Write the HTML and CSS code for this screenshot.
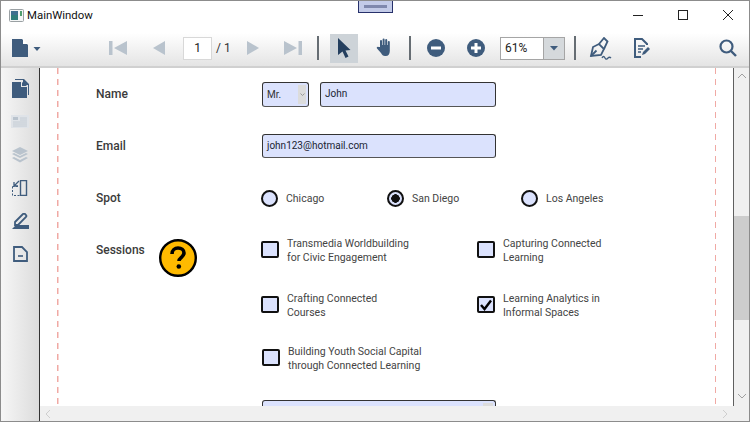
FILE: index.html
```html
<!DOCTYPE html>
<html lang="en">
<head>
<meta charset="utf-8">
<title>MainWindow</title>
<link rel="stylesheet" href="styles.css">
</head>
<body>
<div class="window">
  <div class="tab"><span class="tab-bar"></span></div>
  <header class="titlebar">
    <svg class="app-icon" width="15" height="13" viewBox="0 0 15 13"><rect x=".5" y=".5" width="14" height="12" rx="1" fill="#f4f6f6" stroke="#9aa0a3"/><rect x="2" y="2" width="7" height="9" fill="#2f7d7a"/><rect x="2" y="2" width="7" height="4" fill="#3e6f8f"/><rect x="11" y="2" width="2" height="5" fill="#4f9e6e"/></svg>
    <span class="title">MainWindow</span>
    <div class="caption">
      <svg width="45" height="14" viewBox="0 0 45 14"><path d="M19 7.500h10" stroke="#222" fill="none"/></svg>
      <svg width="45" height="14" viewBox="0 0 45 14"><rect x="19.500" y="2.500" width="9" height="9" stroke="#222" fill="none"/></svg>
      <svg width="45" height="14" viewBox="0 0 45 14"><path d="M19 2l10 10M29 2L19 12" stroke="#222" fill="none"/></svg>
    </div>
  </header>
  <nav class="toolbar">
    <svg class="tool" width="16" height="18" viewBox="0 0 16 18"><path d="M0 0h10l6 6v12H0z" fill="#3f5c7d"/><path d="M11 0l5 5h-5z" fill="#fff"/></svg>
    <svg class="caret" width="16" height="18" viewBox="0 0 16 18"><path d="M4.500 8h7L8 12z" fill="#3f5c7d"/></svg>
    <svg class="tool m-first" width="28" height="16" viewBox="0 0 28 16"><path d="M5 1h3.500v14H5zM23 1v14L10 8z" fill="#b9c3cd"/></svg>
    <svg class="tool m-13" width="28" height="16" viewBox="0 0 28 16"><path d="M20 1v14L8 8z" fill="#b9c3cd"/></svg>
    <span class="page-box">1</span>
    <span class="page-total">/ 1</span>
    <svg class="tool m-next" width="28" height="16" viewBox="0 0 28 16"><path d="M8 1v14l12-7z" fill="#b9c3cd"/></svg>
    <svg class="tool m-12" width="28" height="16" viewBox="0 0 28 16"><path d="M5 1v14l13-7zM19.500 1H23v14h-3.500z" fill="#b9c3cd"/></svg>
    <span class="sep m-sep1"></span>
    <span class="select-btn"><svg width="16" height="20" viewBox="0 0 16 20"><path d="M2 0l12.500 12-5 .5 3 6-3 1.500-3-6.500L2 17z" fill="#243f5f"/></svg></span>
    <svg class="tool m-hand" width="18" height="20" viewBox="0 0 18 20"><path d="M4 9V3a1 1 0 0 1 2 0v4h.6V1.500a1 1 0 0 1 2 0V7h.6V2a1 1 0 0 1 2 0v5h.6V4a1 1 0 0 1 2 0v9c0 3-1.500 5-4 5H9c-2 0-3-1-4-3L1 10.500c-.8-1 .5-2.200 1.500-1.500z" fill="#3f5c7d"/></svg>
    <span class="sep m-sep2"></span>
    <svg class="tool m-minus" width="18" height="18" viewBox="0 0 18 18"><circle cx="9" cy="9" r="9" fill="#3f5c7d"/><rect x="4" y="7.500" width="10" height="3" fill="#fff"/></svg>
    <svg class="tool m-plus" width="18" height="18" viewBox="0 0 18 18"><circle cx="9" cy="9" r="9" fill="#3f5c7d"/><path d="M4 7.500h3.500V4h3v3.500H14v3h-3.500V14h-3v-3.500H4z" fill="#fff"/></svg>
    <div class="zoom-box"><span class="zoom-val">61%</span><span class="zoom-btn"><svg width="8" height="5" viewBox="0 0 8 5"><path d="M0 0h8L4 4.500z" fill="#3f5c7d"/></svg></span></div>
    <span class="sep m-sep3"></span>
    <svg class="tool m-sign" width="24" height="23" viewBox="0 0 24 23"><path d="M2 19l2-9 6-3 5 5-3 6z" fill="none" stroke="#3f5c7d" stroke-width="1.800"/><path d="M10 7l5-6 3.500 3.500L15 12M2 19l5.500-5.500" fill="none" stroke="#3f5c7d" stroke-width="1.800"/><path d="M13 21c1-2 2-2 3 0s2 1 3 0 2-1 3 0" fill="none" stroke="#3f5c7d" stroke-width="1.300"/></svg>
    <svg class="tool m-form" width="18" height="20" viewBox="0 0 18 20"><path d="M8 19H2V1h7l5 5v1" fill="none" stroke="#3f5c7d" stroke-width="2"/><path d="M5 8h7M5 11h5M5 14h3" stroke="#3f5c7d" stroke-width="1.500"/><path d="M9 17l1-3 5-5 2 2-5 5z" fill="#3f5c7d"/></svg>
    <svg class="tool m-search" width="18" height="18" viewBox="0 0 18 18"><circle cx="7.500" cy="7.500" r="6" fill="none" stroke="#3f5c7d" stroke-width="2.200"/><path d="M12 12l5 5" stroke="#3f5c7d" stroke-width="2.400"/></svg>
  </nav>
  <div class="rule"></div>
  <div class="workspace">
    <aside class="sidebar">
      <svg width="17" height="19" viewBox="0 0 17 19"><path d="M3 0h9l5 5v11h-1V6h-5V1H3z" fill="#3f5c7d"/><path d="M0 3h9v5h6v11H0z" fill="#3f5c7d"/><path d="M10 3l5 4h-5z" fill="#3f5c7d"/></svg>
      <svg width="18" height="13" viewBox="0 0 18 13"><rect width="18" height="13" fill="#dfe3e8"/><path d="M2 2h5v3H2z" fill="#b9c3cd"/><path d="M9 3h7M9 5h7M2 7h14M2 9h14M2 11h14" stroke="#c4ccd4"/></svg>
      <svg width="16" height="16" viewBox="0 0 16 16"><path d="M8 0l8 4-8 4-8-4z" fill="#b9c3cd"/><path d="M0 7l2-1 6 3 6-3 2 1-8 4z" fill="#b9c3cd"/><path d="M0 11l2-1 6 3 6-3 2 1-8 4.500z" fill="#b9c3cd"/></svg>
      <svg width="16" height="16" viewBox="0 0 16 16"><path d="M8.500 .5h6v15h-6z" fill="none" stroke="#3f5c7d" stroke-width="1.400"/><path d="M.5 6.500h7M.5 6.500v9h7" fill="none" stroke="#3f5c7d" stroke-dasharray="2 1.500"/><path d="M7 1L2.500 5.500M2 2v4h4" fill="none" stroke="#3f5c7d" stroke-width="1.300"/></svg>
      <svg width="17" height="16" viewBox="0 0 17 16"><path d="M3 9l8-8a1.500 1.500 0 0 1 2 0l1 1a1.500 1.500 0 0 1 0 2l-8 8H3z" fill="none" stroke="#3f5c7d" stroke-width="1.800"/><path d="M0 16l4-4h13v4z" fill="#3f5c7d"/></svg>
      <svg width="15" height="16" viewBox="0 0 15 16"><path d="M1 1h8l5 5v9H1z" fill="none" stroke="#3f5c7d" stroke-width="1.800"/><path d="M5 10h5" stroke="#3f5c7d" stroke-width="1.600"/></svg>
    </aside>
    <main class="viewer">
      <div class="viewer-row">
        <div class="viewer-inner">
          <div class="page">
            <div class="form-row row-name">
              <span class="label">Name</span>
              <div class="fields">
                <div class="field field-title"><span class="title-val">Mr.</span><span class="dd"><svg width="5" height="3" viewBox="0 0 5 3"><path d="M.5.500l2 2 2-2" fill="none" stroke="#888" stroke-width=".8"/></svg></span></div>
                <div class="field field-first">John</div>
              </div>
            </div>
            <div class="form-row row-email">
              <span class="label">Email</span>
              <div class="fields"><div class="field field-email">john123@hotmail.com</div></div>
            </div>
            <div class="form-row row-spot">
              <span class="label">Spot</span>
              <div class="radios">
                <label class="radio r1"><span class="dot"></span>Chicago</label>
                <label class="radio r2"><span class="dot on"></span>San Diego</label>
                <label class="radio"><span class="dot"></span>Los Angeles</label>
              </div>
            </div>
            <div class="form-row row-sessions">
              <span class="label label-s">Sessions</span>
              <svg class="help" width="38" height="38" viewBox="0 0 38 38"><circle cx="19" cy="19" r="17.800" fill="#ffba00" stroke="#000" stroke-width="2.400"/><path d="M13 15c0-4 3-6 6-6 3.500 0 6 2 6 5 0 4-5 4.500-5 8" fill="none" stroke="#000" stroke-width="3.600"/><circle cx="19.800" cy="27.500" r="2.300"/></svg>
              <div class="checks">
                <div class="check"><span class="box"></span><span>Transmedia Worldbuilding<br>for Civic Engagement</span></div>
                <div class="check"><span class="box"></span><span>Capturing Connected<br>Learning</span></div>
                <div class="check"><span class="box"></span><span>Crafting Connected<br>Courses</span></div>
                <div class="check"><span class="box"><svg width="14" height="12" viewBox="0 0 14 12"><path d="M2 6l3.500 4L12 1.500" fill="none" stroke="#000" stroke-width="2.400"/></svg></span><span>Learning Analytics in<br>Informal Spaces</span></div>
                <div class="check check-last"><span class="box"></span><span>Building Youth Social Capital<br>through Connected Learning</span></div>
              </div>
            </div>
            <div class="field field-next"><span class="dd dd-wide"></span></div>
          </div>
        </div>
        <div class="vscroll">
          <svg width="10" height="6" viewBox="0 0 10 6"><path d="M1 5l4-4 4 4" fill="none" stroke="#a0a0a0"/></svg>
          <span class="thumb"></span>
          <svg width="10" height="6" viewBox="0 0 10 6"><path d="M1 1l4 4 4-4" fill="none" stroke="#a0a0a0"/></svg>
        </div>
      </div>
      <div class="hscroll"><svg width="6" height="10" viewBox="0 0 6 10"><path d="M5 1L1 5l4 4" fill="none" stroke="#cfcfcf"/></svg><svg width="6" height="10" viewBox="0 0 6 10"><path d="M1 1l4 4-4 4" fill="none" stroke="#cfcfcf"/></svg></div>
    </main>
  </div>
</div>
</body>
</html>
```
FILE: styles.css
```css
* { box-sizing: border-box; }
html, body { margin: 0; height: 100%; overflow: hidden; }
body { background: #fff; font-family: "Roboto", sans-serif; }
.window { position: relative; width: 750px; height: 422px; display: flex; flex-direction: column; border: 1px solid #8c8c8c; background: #fff; overflow: hidden; }
.tab { position: absolute; left: 357px; top: -1px; width: 35px; height: 13px; background: #c3cbe8; border: 1px solid #27316b; display: flex; align-items: center; justify-content: center; }
.tab-bar { width: 23px; height: 3px; background: #7f88ad; }
.titlebar { height: 32px; display: flex; align-items: center; padding: 0 0 4px 8px; flex: none; }
.app-icon { margin-right: 3px; }
.title { font: 11.400px "Roboto", sans-serif; color: #111; }
.caption { margin-left: auto; display: flex; }
.toolbar { height: 33px; flex: none; display: flex; align-items: center; padding: 0 0 3px 11px; background: linear-gradient(#fff 0%, #f3f3f3 45%, #e4e4e4 100%); }
.rule { height: 2px; flex: none; background: #d0d0d0; }
.tool, .caret { flex: none; display: block; }
.caret { margin-left: 1px; }
.m-first { margin-left: 59px; }
.m-13 { margin-left: 13px; }
.page-box { margin-left: 10px; width: 29px; height: 23px; flex: none; background: #fff; border: 1px solid #d8d8d8; font-size: 12px; line-height: 21px; text-align: center; color: #222; }
.page-total { margin-left: 4px; width: 18px; flex: none; font-size: 12px; color: #333; }
.m-next { margin-left: 5px; }
.m-12 { margin-left: 12px; }
.sep { width: 2px; height: 24px; background: #666d73; flex: none; }
.m-sep1 { margin-left: 10px; }
.select-btn { margin-left: 11px; width: 28px; height: 29px; background: #cdd3d8; display: flex; align-items: center; justify-content: center; flex: none; }
.m-hand { margin-left: 18px; }
.m-sep2 { margin-left: 15px; }
.m-minus { margin-left: 16px; }
.m-plus { margin-left: 22px; }
.zoom-box { margin-left: 15px; width: 65px; height: 23px; display: flex; border: 1px solid #a5a5a5; background: #fff; flex: none; }
.zoom-val { flex: 1; font-size: 12px; line-height: 21px; padding-left: 4px; color: #222; }
.zoom-btn { width: 21px; background: #d5d9dc; border-left: 1px solid #a5a5a5; display: flex; align-items: center; justify-content: center; }
.m-sep3 { margin-left: 9px; }
.m-sign { margin-left: 13px; }
.m-form { margin-left: 20px; }
.m-search { margin-left: 68px; }
.workspace { flex: 1; display: flex; min-height: 0; }
.sidebar { width: 39px; flex: none; border-right: 1.500px solid #333; background: linear-gradient(90deg, #f6f6f6, #dcdcdc); display: grid; grid-auto-rows: 33px; align-content: start; justify-items: center; align-items: center; padding-top: 4px; }
.viewer { flex: 1; min-width: 0; display: flex; flex-direction: column; }
.viewer-row { flex: 1; min-height: 0; display: flex; }
.viewer-inner { flex: 1; min-width: 0; overflow: hidden; background: #fff; }
.hscroll { height: 15px; flex: none; background: #f0f0f0; display: flex; align-items: center; justify-content: space-between; padding: 0 21px 0 5px; }
.vscroll { width: 16px; flex: none; background: #f0f0f0; border-left: 1.500px solid #5f5f5f; display: flex; flex-direction: column; align-items: center; padding-top: 5px; }
.thumb { width: 15px; height: 104px; background: #cdcdcd; margin-top: 137px; margin-bottom: 73px; flex: none; }
.page { height: 340px; margin: 0 17px 0 17px; padding-left: 39px; color: #444; font-size: 10.500px;
  background:
    repeating-linear-gradient(#f0a9a4 0 6px, transparent 6px 11px) left top / 1.500px 100% no-repeat,
    repeating-linear-gradient(#f0a9a4 0 6px, transparent 6px 11px) right top / 1.500px 100% no-repeat; }
.form-row { display: flex; }
.label { width: 166px; font-size: 12px; font-weight: 500; color: #3b3b3b; flex: none; }
.row-name { padding-top: 14px; height: 66px; align-items: flex-start; }
.row-name .label { line-height: 24px; }
.fields { display: flex; gap: 11px; }
.field { height: 24px; border: 1px solid #333; border-bottom-color: #555; border-radius: 3px; background: #dbe2fd; font-size: 10px; line-height: 22px; padding-left: 4px; color: #1a1f33; display: flex; }
.row-name .field { height: 25px; }
.field-title { width: 47px; justify-content: space-between; color: #333; }
.title-val { padding-top: 1px; }
.dd { width: 8px; height: 19px; margin: 2px 2px 0 0; background: #dcdcdc; display: flex; align-items: center; justify-content: center; }
.field-first { width: 176px; }
.field-email { width: 234px; }
.row-email { height: 54px; }
.row-email .label { line-height: 24px; }
.row-spot { height: 49px; align-items: flex-start; }
.row-spot .label { line-height: 20px; }
.radios { display: flex; padding-top: 2px; margin-left: -1px; }
.radio { display: flex; align-items: center; gap: 8px; }
.r1 { width: 126px; }
.r2 { width: 134px; }
.dot { width: 17px; height: 17px; border: 2px solid #111; border-radius: 50%; background: #dbe2fd; }
.dot.on { background: radial-gradient(circle, #111 0 4px, #dbe2fd 4.500px); }
.row-sessions { position: relative; height: 163px; }
.label-s { line-height: 24px; padding-top: 1px; }
.help { position: absolute; left: 63px; top: 2px; }
.checks { display: grid; grid-template-columns: 216px 140px; grid-template-rows: 55px 53px 54px; margin-left: -1px; }
.check { display: flex; gap: 8px; line-height: 14px; }
.box { width: 18px; height: 17px; margin-top: 4px; flex: none; border: 2px solid #111; border-radius: 2px; background: #dbe2fd; display: flex; align-items: center; justify-content: center; }
.check-last { margin-left: 1px; }
.field-next { width: 234px; margin: 0 0 0 166px; justify-content: flex-end; }
.dd-wide { width: 10px; }
```
